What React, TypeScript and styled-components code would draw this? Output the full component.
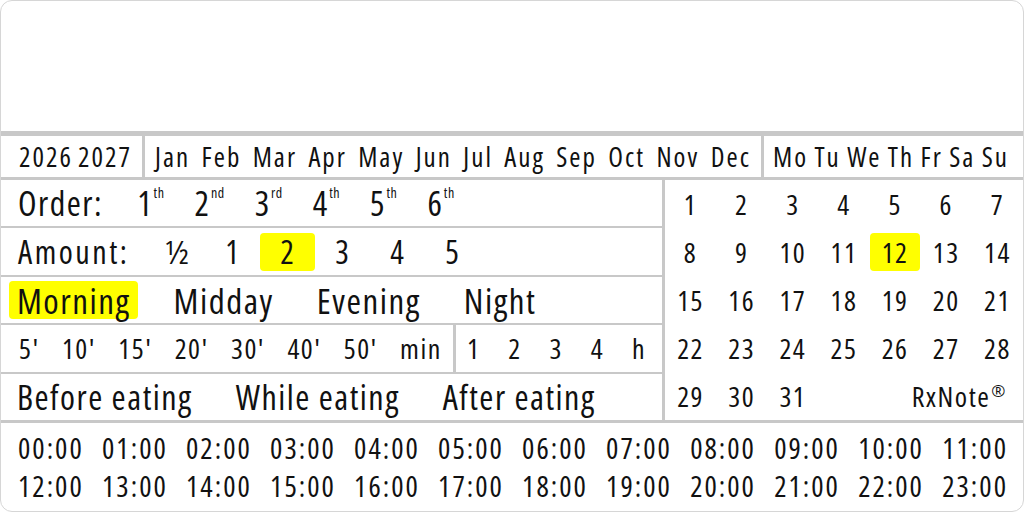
import React from 'react';
import styled, { createGlobalStyle } from 'styled-components';

const GlobalStyle = createGlobalStyle`
  html, body {
    margin: 0;
    padding: 0;
    background: #ffffff;
  }
  body {
    font-family: "Open Sans", "Noto Sans", sans-serif;
    font-stretch: condensed;
    letter-spacing: 1.5px;
    color: #111111;
  }
`;

const LINE = '#c8c8c8';

const Card = styled.div`
  width: 1024px;
  height: 512px;
  box-sizing: border-box;
  border: 1px solid #d6d6d6;
  border-radius: 12px;
  overflow: hidden;
  display: flex;
  flex-direction: column;
  background: #ffffff;
  white-space: nowrap;
`;

const TopSpace = styled.div`
  height: 130px;
  flex: none;
`;

const HeaderRow = styled.div`
  display: flex;
  height: 41px;
  flex: none;
  border-top: 5px solid ${LINE};
  border-bottom: 3px solid ${LINE};
  font-size: 27px;
  letter-spacing: 2px;
`;

const HeaderCell = styled.div<{ $width?: number; $pl: number; $pr: number; $divider?: boolean }>`
  display: flex;
  align-items: center;
  justify-content: space-between;
  box-sizing: border-box;
  ${(p) => (p.$width ? `width: ${p.$width}px; flex: none;` : 'flex: 1;')}
  padding: 0 ${(p) => p.$pr}px 0 ${(p) => p.$pl}px;
  border-right: ${(p) => (p.$divider ? `3px solid ${LINE}` : 'none')};
`;

const Body = styled.div`
  display: flex;
  height: 240px;
  flex: none;
  border-bottom: 3px solid ${LINE};
`;

const LeftPanel = styled.div`
  width: 661px;
  flex: none;
  display: flex;
  flex-direction: column;
  border-right: 3px solid ${LINE};
`;

const Row = styled.div<{ $last?: boolean }>`
  flex: 1;
  display: flex;
  align-items: center;
  border-bottom: ${(p) => (p.$last ? 'none' : `2px solid ${LINE}`)};
  min-height: 0;
`;

const Label = styled.span<{ $size: number; $gap: number; $spacing: number }>`
  font-size: ${(p) => p.$size}px;
  letter-spacing: ${(p) => p.$spacing}px;
  padding-left: 17px;
  margin-right: ${(p) => p.$gap}px;
`;

const OrderList = styled.div`
  display: flex;
  gap: 30px;
  font-size: 34px;
`;

const Ordinal = styled.span`
  letter-spacing: 0;
  sup {
    font-size: 14px;
    letter-spacing: 0.5px;
    vertical-align: top;
    position: relative;
    top: 3px;
    margin-left: 2px;
  }
`;

const AmountList = styled.div`
  display: flex;
  font-size: 32px;
`;

const Chip = styled.span<{ $active?: boolean; $width?: number }>`
  display: inline-flex;
  align-items: center;
  justify-content: center;
  height: 38px;
  border-radius: 4px;
  white-space: nowrap;
  background: ${(p) => (p.$active ? '#ffff00' : 'transparent')};
  ${(p) => (p.$width ? `width: ${p.$width}px;` : 'padding: 0 7px 0 8px;')}
`;

const WordList = styled.div<{ $size: number; $pl: number }>`
  display: flex;
  gap: 28px;
  padding-left: ${(p) => p.$pl}px;
  font-size: ${(p) => p.$size}px;
`;

const TimeCell = styled.div<{ $width?: number; $pl: number; $pr: number; $divider?: boolean }>`
  height: 100%;
  display: flex;
  align-items: center;
  justify-content: space-between;
  box-sizing: border-box;
  ${(p) => (p.$width ? `width: ${p.$width}px; flex: none;` : 'flex: 1;')}
  padding: 0 ${(p) => p.$pr}px 0 ${(p) => p.$pl}px;
  border-right: ${(p) => (p.$divider ? `3px solid ${LINE}` : 'none')};
  font-size: 28px;
`;

const Calendar = styled.div`
  flex: 1;
  display: grid;
  grid-template-columns: repeat(7, 1fr);
  grid-template-rows: repeat(5, 1fr);
  align-items: center;
  justify-items: center;
  font-size: 28px;
`;

const Day = styled.span<{ $active?: boolean }>`
  width: 50px;
  height: 38px;
  display: flex;
  align-items: center;
  justify-content: center;
  border-radius: 4px;
  background: ${(p) => (p.$active ? '#ffff00' : 'transparent')};
`;

const Brand = styled.span`
  grid-column: 4 / 8;
  justify-self: end;
  padding-right: 16px;
  sup {
    font-size: 17px;
    vertical-align: top;
    position: relative;
    top: 2px;
    margin-left: 1px;
  }
`;

const Hours = styled.div`
  flex: 1;
  display: grid;
  grid-template-columns: repeat(12, auto);
  justify-content: space-between;
  align-content: center;
  padding: 0 15px 0 17px;
  font-size: 29px;
  letter-spacing: 2px;
  line-height: 38px;
`;

const years = ['2026', '2027'];
const months = ['Jan', 'Feb', 'Mar', 'Apr', 'May', 'Jun', 'Jul', 'Aug', 'Sep', 'Oct', 'Nov', 'Dec'];
const weekdays = ['Mo', 'Tu', 'We', 'Th', 'Fr', 'Sa', 'Su'];
const ordinals = [
  ['1', 'th'],
  ['2', 'nd'],
  ['3', 'rd'],
  ['4', 'th'],
  ['5', 'th'],
  ['6', 'th'],
];
const amounts = ['½', '1', '2', '3', '4', '5'];
const dayParts = ['Morning', 'Midday', 'Evening', 'Night'];
const minutes = ["5'", "10'", "15'", "20'", "30'", "40'", "50'", 'min'];
const hourSteps = ['1', '2', '3', '4', 'h'];
const meals = ['Before eating', 'While eating', 'After eating'];
const days = Array.from({ length: 31 }, (_, i) => i + 1);
const clock = Array.from({ length: 24 }, (_, i) => `${String(i).padStart(2, '0')}:00`);

const App = () => {
  return (
    <>
      <GlobalStyle />
      <Card>
        <TopSpace />
        <HeaderRow>
          <HeaderCell $width={144} $pl={18} $pr={10} $divider>
            {years.map((y) => (
              <span key={y}>{y}</span>
            ))}
          </HeaderCell>
          <HeaderCell $pl={10} $pr={10} $divider>
            {months.map((m) => (
              <span key={m}>{m}</span>
            ))}
          </HeaderCell>
          <HeaderCell $width={259} $pl={9} $pr={14}>
            {weekdays.map((d) => (
              <span key={d}>{d}</span>
            ))}
          </HeaderCell>
        </HeaderRow>
        <Body>
          <LeftPanel>
            <Row>
              <Label $size={34} $gap={34} $spacing={1.5}>
                Order:
              </Label>
              <OrderList>
                {ordinals.map(([n, s]) => (
                  <Ordinal key={n}>
                    {n}
                    <sup>{s}</sup>
                  </Ordinal>
                ))}
              </OrderList>
            </Row>
            <Row>
              <Label $size={32} $gap={21} $spacing={2.5}>
                Amount:
              </Label>
              <AmountList>
                {amounts.map((a) => (
                  <Chip key={a} $width={55} $active={a === '2'}>
                    {a}
                  </Chip>
                ))}
              </AmountList>
            </Row>
            <Row>
              <WordList $size={35} $pl={8}>
                {dayParts.map((d) => (
                  <Chip key={d} $active={d === 'Morning'}>
                    {d}
                  </Chip>
                ))}
              </WordList>
            </Row>
            <Row>
              <TimeCell $width={455} $pl={18} $pr={11} $divider>
                {minutes.map((m) => (
                  <span key={m}>{m}</span>
                ))}
              </TimeCell>
              <TimeCell $pl={11} $pr={16}>
                {hourSteps.map((h) => (
                  <span key={h}>{h}</span>
                ))}
              </TimeCell>
            </Row>
            <Row $last>
              <WordList $size={34} $pl={8}>
                {meals.map((m) => (
                  <Chip key={m}>{m}</Chip>
                ))}
              </WordList>
            </Row>
          </LeftPanel>
          <Calendar>
            {days.map((d) => (
              <Day key={d} $active={d === 12}>
                {d}
              </Day>
            ))}
            <Brand>
              RxNote<sup>®</sup>
            </Brand>
          </Calendar>
        </Body>
        <Hours>
          {clock.map((t) => (
            <span key={t}>{t}</span>
          ))}
        </Hours>
      </Card>
    </>
  );
};

export default App;
